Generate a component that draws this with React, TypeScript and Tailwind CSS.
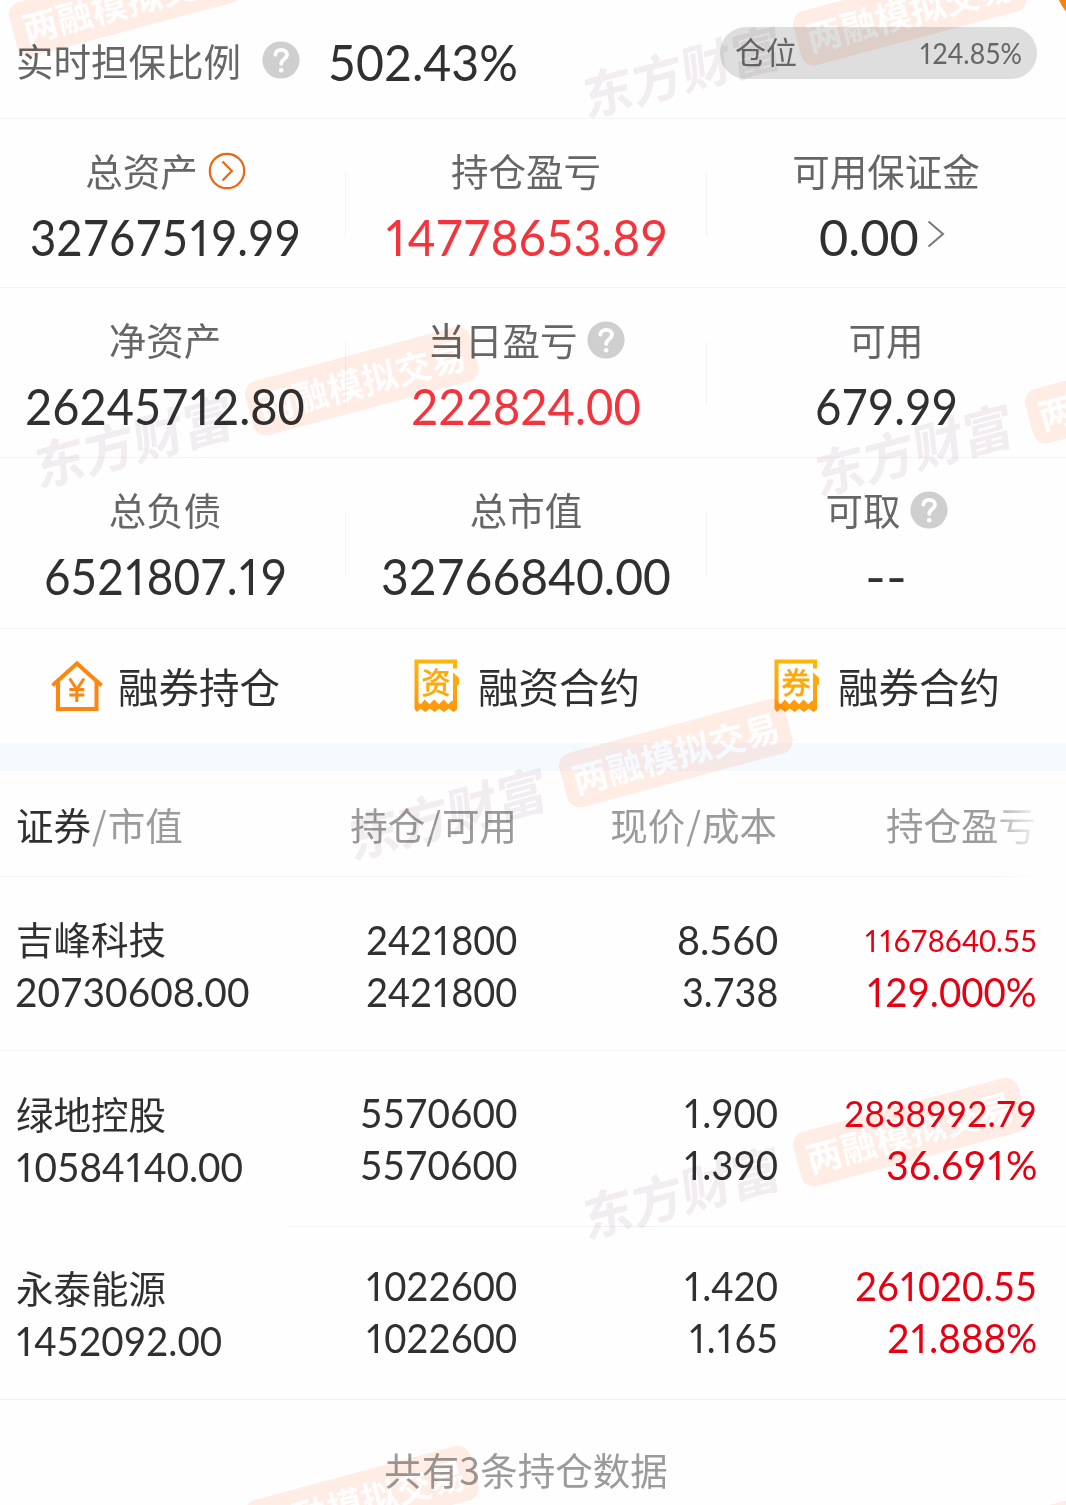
import React, { useLayoutEffect, useRef, useState } from "react";

type Tone = "dark" | "up";

/** A figure set in Lato and condensed horizontally so that it takes up `width` pixels; only the ones are narrow. */
function Num({ text, width, className = "" }: { text: string; width: number; className?: string }) {
  const ref = useRef<HTMLSpanElement>(null);
  const [scale, setScale] = useState(1);
  useLayoutEffect(() => {
    if (ref.current) setScale(width / ref.current.offsetWidth);
  }, [text, width]);
  return (
    <span className={`inline-block whitespace-nowrap text-left align-top font-[Lato] tabular-nums [font-kerning:none] ${className}`} style={{ width }}>
      <span ref={ref} className="inline-block origin-left" style={{ transform: `scaleX(${scale})` }}>
        {text.split(/(1)/).map((part, i) =>
          part === "1" ? <span key={i} className="pr-[0.06em] pl-[0.045em] proportional-nums">1</span> : part
        )}
      </span>
    </span>
  );
}

function Watermark({ className }: { className: string }) {
  return (
    <div className={`absolute flex h-[56px] w-[460px] items-center -rotate-15 ${className}`}>
      <span className="w-[221px] -translate-y-[3px] -skew-x-8 whitespace-nowrap text-[51px] leading-[56px] font-bold text-[#f2eef1]">东方财富</span>
      <span className="flex h-[56px] w-[233px] shrink-0 items-center justify-center rounded-[13px] bg-[#ffede6] pb-[2px] text-[35.5px] font-bold whitespace-nowrap text-white">
        两融模拟交易
      </span>
    </div>
  );
}

function Help({ className = "" }: { className?: string }) {
  return (
    <svg viewBox="0 0 38 38" className={`size-[38px] shrink-0 ${className}`}>
      <circle cx="19" cy="19" r="18.600" fill="#cfcfcf" />
      <path d="M13.300 13.600c.6-3.100 2.800-4.700 5.900-4.700 3.400 0 5.800 1.900 5.800 4.900 0 4-5.600 4.400-5.800 9" fill="none" stroke="#fff" strokeWidth="3.800" strokeLinecap="round" />
      <circle cx="19.200" cy="29.300" r="2.300" fill="#fff" />
    </svg>
  );
}

function GoCircle() {
  return (
    <svg viewBox="0 0 38 38" className="-mr-px ml-[10px] size-[38px] shrink-0" fill="none" stroke="#f0640f">
      <circle cx="19" cy="19" r="17.200" strokeWidth="2.200" />
      <path d="M14.500 9.500 23.800 19l-9.300 9.500" strokeWidth="2.200" />
    </svg>
  );
}

function Metric({ label, value, width, tone = "dark", icon, after, className = "" }: {
  label: string; value: string; width: number; tone?: Tone; icon?: React.ReactNode; after?: React.ReactNode; className?: string;
}) {
  return (
    <div className={`flex flex-col items-center pt-[28px] ${className}`}>
      <div className="flex h-[48px] items-center text-[37.5px] leading-[48px] text-[#666]">
        <span className="-mt-[2px]">{label}</span>
        {icon}
      </div>
      <div className={`flex h-[84px] items-center text-[51px] ${tone === "up" ? "text-[#f4333c]" : "text-[#303030]"}`}>
        <Num text={value} width={width} />
        {after}
      </div>
    </div>
  );
}

function MetricRow({ children, className }: { children: React.ReactNode; className: string }) {
  return (
    <div className={`relative grid grid-cols-[346px_360px_360px] border-b border-[#f3f3f3] ${className}`}>
      {children}
      <i className="absolute top-[54px] left-[345px] h-[64px] w-px bg-[#f3f3f3]" />
      <i className="absolute top-[54px] left-[706px] h-[64px] w-px bg-[#f3f3f3]" />
    </div>
  );
}

function HouseIcon() {
  return (
    <svg viewBox="0 0 52 52" className="h-[52px] w-[52px]" fill="none" stroke="#fd8510" strokeWidth="4">
      <path d="M1.500 25.500 26 3.500l24.500 22" />
      <path d="M7 21.500v27.500h38.500V21.500" />
      <path d="m18.600 18.500 7.200 11L33 18.500M25.800 29v13M18.300 29.500h15M18.300 35h15" strokeWidth="3" />
    </svg>
  );
}

function SlipIcon({ glyph }: { glyph: string }) {
  return (
    <span className="relative flex h-[54px] w-[46px] justify-center">
      <svg viewBox="0 0 46 54" className="absolute inset-0 h-[54px] w-[46px]">
        <defs>
          <linearGradient id="slip" x1="0" y1="0" x2="0" y2="1">
            <stop offset="0" stopColor="#fdb60c" />
            <stop offset="1" stopColor="#fd970a" />
          </linearGradient>
        </defs>
        <path
          fill="url(#slip)"
          d="M.5.500H43V9.500H39V4.500H4.500V44l2.500 1 3.800-4.500 4.700 4.800 4.700-4.800 4.700 4.800 4.700-4.800 4.700 4.800 3.500-3.600L39 42V13.500l4 3.500 2 2v6l-2 2v23.500L39.500 53l-4.800-3.500-4.700 3.500-4.700-3.500L20.600 53l-4.700-3.500L11.200 53l-4.700-3.500L3 53 .5 50z"
        />
      </svg>
      <span className="relative mt-[6px] h-[32px] -translate-x-px text-[29px] leading-[32px] text-[#fda90c] [-webkit-text-stroke:0.8px_#fda90c]">{glyph}</span>
    </span>
  );
}

function Action({ icon, label, className }: { icon: React.ReactNode; label: string; className: string }) {
  return (
    <div className={`flex items-center text-[40.5px] text-[#303030] ${className}`}>
      {icon}
      <span>{label}</span>
    </div>
  );
}

type Figure = [text: string, width: number];

const holdings: {
  name: string; market: Figure; qty: Figure; price: Figure; cost: Figure; gain: Figure; pct: Figure;
  gainSize: string; row: string; left: string; line: string;
}[] = [
  { name: "吉峰科技", market: ["20730608.00", 234], qty: ["2421800", 151], price: ["8.560", 101], cost: ["3.738", 96], gain: ["11678640.55", 173], pct: ["129.000%", 171], gainSize: "text-[31px]", row: "h-[174px] pt-[37px]", left: "", line: "w-full" },
  { name: "绿地控股", market: ["10584140.00", 228], qty: ["5570600", 157], price: ["1.900", 95], cost: ["1.390", 95], gain: ["2838992.79", 193], pct: ["36.691%", 151], gainSize: "text-[37px]", row: "h-[176px] pt-[36px]", left: "pt-[2px]", line: "w-[778px]" },
  { name: "永泰能源", market: ["1452092.00", 207], qty: ["1022600", 152], price: ["1.420", 95], cost: ["1.165", 90], gain: ["261020.55", 182], pct: ["21.888%", 150], gainSize: "text-[40px]", row: "h-[173px] pt-[33px]", left: "pt-[3px]", line: "w-full" },
];

export default function App() {
  return (
    <div className="relative h-[1505px] w-[1066px] overflow-hidden bg-[#fefefe] font-['Noto_Sans_CJK_SC',sans-serif]">
      <header className="flex h-[119px] items-start border-b border-[#f3f3f3] pl-[16px]">
        <span className="mt-[32px] text-[37.5px] leading-[56px] text-[#666]">实时担保比例</span>
        <Help className="mt-[41px] ml-[21px]" />
        <Num text="502.43%" width={190} className="mt-[26px] ml-[28px] text-[51px] leading-[72px] text-[#303030]" />
        <div className="mt-[27px] mr-[29px] ml-auto flex h-[52px] w-[317px] items-center justify-between rounded-full bg-[#dedede] pr-[15px] pl-[15px] text-[#666]">
          <span className="-mt-[3px] text-[31px]">仓位</span>
          <Num text="124.85%" width={103} className="text-[28px]" />
        </div>
        <i className="absolute -top-[55px] -right-[70px] size-[80px] rounded-full bg-[#f98307]" />
      </header>

      <MetricRow className="h-[169px]">
        <Metric className="pr-[16px]" label="总资产" value="32767519.99" width={271} icon={<GoCircle />} />
        <Metric label="持仓盈亏" value="14778653.89" width={284} tone="up" />
        <Metric
          label="可用保证金"
          value="0.00"
          width={100}
          after={
            <svg viewBox="0 0 18 28" className="mt-[-7px] mr-[8px] ml-[8px] h-[28px] w-[18px]" fill="none" stroke="#777" strokeWidth="2">
              <path d="M1.500 1.500 16 14 1.500 26.500" />
            </svg>
          }
        />
      </MetricRow>
      <MetricRow className="h-[170px]">
        <Metric className="pr-[16px]" label="净资产" value="26245712.80" width={280} />
        <Metric label="当日盈亏" value="222824.00" width={230} tone="up" icon={<Help className="ml-[9px]" />} />
        <Metric label="可用" value="679.99" width={143} />
      </MetricRow>
      <MetricRow className="h-[171px]">
        <Metric className="pr-[16px]" label="总负债" value="6521807.19" width={243} />
        <Metric label="总市值" value="32766840.00" width={290} />
        <Metric label="可取" value="--" width={42} icon={<Help className="-mr-px ml-[9px]" />} />
      </MetricRow>

      <nav className="grid h-[114px] grid-cols-[360px_360px_346px] items-center">
        <Action className="gap-[15px] pl-[51px]" icon={<HouseIcon />} label="融券持仓" />
        <Action className="gap-[18px] pl-[54px]" icon={<SlipIcon glyph="资" />} label="融资合约" />
        <Action className="gap-[18px] pl-[54px]" icon={<SlipIcon glyph="券" />} label="融券合约" />
      </nav>
      <div className="h-[28px] bg-[#f5faff]" />

      <div className="relative grid h-[106px] grid-cols-[288px_229px_260px_259px] items-center border-b border-[#f1f1f1] pt-px text-[37.5px] text-[#9b9b9b]">
        <span className="pl-[16px]"><span className="text-[#303030]">证券</span><span className="mx-px">/</span>市值</span>
        <span className="text-right">持仓<span className="mx-px">/</span>可用</span>
        <span className="text-right">现价<span className="mx-px">/</span>成本</span>
        <span className="text-right">持仓盈亏</span>
        <i className="absolute top-0 right-0 h-[106px] w-[80px] bg-gradient-to-r from-transparent to-[#fefefe] to-70%" />
      </div>

      {holdings.map((h) => (
        <div key={h.name} className={`relative grid grid-cols-[288px_229px_261px_259px] text-[40px] leading-[52px] text-[#303030] ${h.row}`}>
          <div className={`pl-[15px] ${h.left}`}>
            <div className="-mt-[2px] mb-[2px] h-[52px] pl-px text-[37.5px]">{h.name}</div>
            <Num text={h.market[0]} width={h.market[1]} />
          </div>
          <div className="flex flex-col items-end">
            <Num text={h.qty[0]} width={h.qty[1]} />
            <Num text={h.qty[0]} width={h.qty[1]} />
          </div>
          <div className="flex flex-col items-end">
            <Num text={h.price[0]} width={h.price[1]} />
            <Num text={h.cost[0]} width={h.cost[1]} />
          </div>
          <div className="flex flex-col items-end text-[#e60012]">
            <Num text={h.gain[0]} width={h.gain[1]} className={h.gainSize} />
            <Num text={h.pct[0]} width={h.pct[1]} />
          </div>
          <i className={`absolute right-0 bottom-0 h-px bg-[#f1f1f1] ${h.line}`} />
        </div>
      ))}

      <footer className="pt-[41px] pr-[14px] text-center text-[37.5px] leading-[56px] text-[#9b9b9b]">共有3条持仓数据</footer>

      <div className="pointer-events-none absolute inset-0 overflow-hidden mix-blend-multiply">
        <Watermark className="top-[2px] left-[-208px]" />
        <Watermark className="top-[11px] left-[576px]" />
        <Watermark className="top-[381px] left-[28px]" />
        <Watermark className="top-[389px] left-[808px]" />
        <Watermark className="top-[753px] left-[342px]" />
        <Watermark className="top-[1132px] left-[576px]" />
        <Watermark className="top-[1500px] left-[28px]" />
        <Watermark className="top-[1509px] left-[808px]" />
      </div>
    </div>
  );
}
